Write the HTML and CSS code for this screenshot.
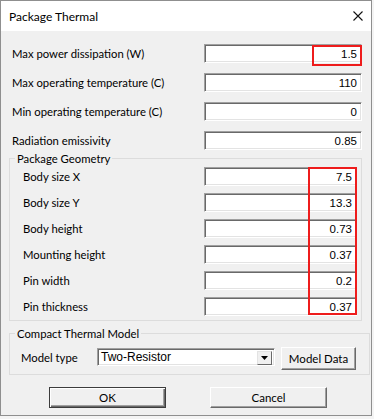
FILE: index.html
```html
<!DOCTYPE html>
<html lang="en">
<head>
    <meta charset="UTF-8">
    <meta name="viewport" content="width=device-width, initial-scale=1.0">
    <title>Package Thermal</title>
    <link rel="stylesheet" href="styles.css">
</head>
<body>
    <div class="window">
        <div class="titlebar">
            <span class="title">Package Thermal</span>
            <svg class="close" width="10" height="10" viewBox="0 0 10 10">
                <path d="M0.5 0.5 L9.5 9.5 M9.5 0.5 L0.5 9.5" stroke="#111" stroke-width="1.1" fill="none"/>
            </svg>
        </div>
        <div class="client">
            <div class="fields">
                <div class="row">
                    <label>Max power dissipation (W)</label>
                    <div class="field">
                        <div class="edit wide">1.5</div>
                        <span class="mark mark-power"></span>
                    </div>
                </div>
                <div class="row">
                    <label>Max operating temperature (C)</label>
                    <div class="edit wide">110</div>
                </div>
                <div class="row">
                    <label>Min operating temperature (C)</label>
                    <div class="edit wide">0</div>
                </div>
                <div class="row">
                    <label>Radiation emissivity</label>
                    <div class="edit wide">0.85</div>
                </div>
            </div>

            <fieldset class="group geometry">
                <legend>Package Geometry</legend>
                <div class="geo-rows">
                    <div class="row geo">
                        <label>Body size X</label>
                        <div class="edit">7.5</div>
                    </div>
                    <div class="row geo">
                        <label>Body size Y</label>
                        <div class="edit">13.3</div>
                    </div>
                    <div class="row geo">
                        <label>Body height</label>
                        <div class="edit">0.73</div>
                    </div>
                    <div class="row geo">
                        <label>Mounting height</label>
                        <div class="edit">0.37</div>
                    </div>
                    <div class="row geo">
                        <label>Pin width</label>
                        <div class="edit">0.2</div>
                    </div>
                    <div class="row geo">
                        <label>Pin thickness</label>
                        <div class="edit">0.37</div>
                    </div>
                    <span class="mark mark-geo"></span>
                </div>
            </fieldset>

            <fieldset class="group compact">
                <legend>Compact Thermal Model</legend>
                <div class="model-row">
                    <label>Model type</label>
                    <div class="combo">
                        <span class="combo-text">Two-Resistor</span>
                        <span class="combo-btn">
                            <svg width="7" height="4" viewBox="0 0 7 4"><path d="M0 0 H7 L3.5 4 Z" fill="#000"/></svg>
                        </span>
                    </div>
                    <button class="btn model-btn">Model Data</button>
                </div>
            </fieldset>

            <div class="actions">
                <button class="btn default">OK</button>
                <button class="btn">Cancel</button>
            </div>
        </div>
    </div>
</body>
</html>
```

FILE: styles.css
```css
* {
    box-sizing: border-box;
}
body {
    margin: 0;
    background: #f4f4f4;
    font-family: Lato, "Noto Sans", sans-serif;
    font-size: 11.3px;
    color: #000;
}
.window {
    width: 372px;
    height: 416px;
    border: 1px solid #8f8f8f;
    background: #f0f0f0;
}
.titlebar {
    height: 30px;
    background: #fff;
    display: flex;
    align-items: center;
    justify-content: space-between;
    padding: 0 8px 0 8px;
}
.title {
    font-size: 12px;
    color: #000;
}
.client {
    padding: 13px 0 0 8px;
}
.fields {
    display: flex;
    flex-direction: column;
    gap: 10px;
}
.row {
    display: flex;
    align-items: center;
    height: 19px;
    padding-left: 3px;
}
.row label {
    width: 192px;
    white-space: nowrap;
}
.field {
    position: relative;
}
.edit {
    height: 19px;
    width: 153px;
    background: #fff;
    border-top: 1px solid #a0a0a0;
    border-left: 1px solid #a0a0a0;
    border-right: 1px solid #fff;
    border-bottom: 1px solid #fff;
    box-shadow: inset 1px 1px 0 #696969, inset -1px -1px 0 #e3e3e3;
    text-align: right;
    padding: 2px 4px 0 0;
    font-family: "Liberation Sans", Arial, sans-serif;
    font-size: 11.5px;
    line-height: 14px;
}
.edit.wide {
    width: 158px;
}
.mark {
    position: absolute;
    border: 2px solid #ee1c1c;
}
.mark-power {
    left: 108px;
    top: 1px;
    width: 50px;
    height: 21px;
}
.group {
    margin: 0;
    border: 1px solid #dcdcdc;
    padding: 0 4px 4px 5px;
}
.group legend {
    padding: 0 2px;
    line-height: 15px;
}
.geometry {
    width: 352px;
    margin-top: 1px;
    padding-top: 1px;
}
.geo-rows {
    position: relative;
    display: flex;
    flex-direction: column;
    gap: 7px;
}
.row.geo {
    padding-left: 8px;
}
.row.geo label {
    width: 181px;
}
.mark-geo {
    left: 293px;
    top: 0;
    width: 49px;
    height: 148px;
}
.compact {
    width: 361px;
    margin-top: 5px;
    padding-top: 6px;
}
.model-row {
    display: flex;
    align-items: flex-start;
    height: 23px;
    padding-left: 6px;
}
.model-row label {
    width: 76px;
    margin-top: 4px;
}
.combo {
    width: 178px;
    height: 18px;
    margin-top: 1px;
    display: flex;
    background: #fff;
    border-top: 1px solid #a0a0a0;
    border-left: 1px solid #a0a0a0;
    border-right: 1px solid #fff;
    border-bottom: 1px solid #fff;
    box-shadow: inset 1px 1px 0 #696969, inset -1px -1px 0 #e3e3e3;
    padding: 2px 2px 2px 3px;
}
.combo-text {
    flex: 1;
    font-family: "Liberation Sans", Arial, sans-serif;
    font-size: 12px;
    line-height: 13px;
}
.combo-btn {
    width: 15px;
    height: 14px;
    background: #f0f0f0;
    border-top: 1px solid #e3e3e3;
    border-left: 1px solid #e3e3e3;
    border-right: 1px solid #696969;
    border-bottom: 1px solid #696969;
    display: flex;
    align-items: center;
    justify-content: center;
}
.btn {
    font-family: Lato, "Noto Sans", sans-serif;
    font-size: 11.5px;
    color: #000;
    background: #f0f0f0;
    border-top: 1px solid #fff;
    border-left: 1px solid #fff;
    border-right: 1px solid #696969;
    border-bottom: 1px solid #696969;
    box-shadow: inset -1px -1px 0 #a0a0a0;
    padding: 0;
}
.model-btn {
    width: 75px;
    height: 23px;
    margin-left: 6px;
}
.actions {
    display: flex;
    gap: 44px;
    margin-top: 12px;
    padding-left: 40px;
}
.actions .btn {
    width: 117px;
    height: 21px;
}
.btn.default {
    border: 1px solid #3c3c3c;
    box-shadow: inset 1px 1px 0 #fff, inset -1px -1px 0 #696969, inset -2px -2px 0 #a0a0a0;
}
```
